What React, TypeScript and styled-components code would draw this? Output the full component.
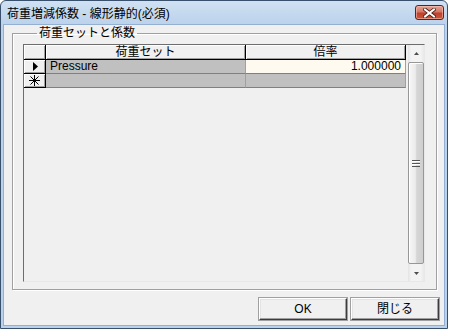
import React from 'react';
import styled, { createGlobalStyle } from 'styled-components';

const Global = createGlobalStyle`
  html, body { margin: 0; padding: 0; background: #ffffff; }
  body {
    font-family: "Liberation Sans", "Noto Sans CJK JP", sans-serif;
    font-size: 12px;
    color: #000;
  }
  * { box-sizing: border-box; }
`;

const Window = styled.div`
  width: 448px;
  height: 329px;
  border: 1px solid #39506d;
  border-radius: 6px 6px 0 0;
  background: linear-gradient(180deg, #d0e1f3 0px, #bcd3eb 22px, #b9d1ea 100%);
  display: flex;
  flex-direction: column;
  padding: 0 2px 2px 2px;
`;

const TitleBar = styled.div`
  height: 23px;
  flex: none;
  display: flex;
  align-items: flex-start;
  justify-content: space-between;
`;

const Title = styled.div`
  padding: 6px 0 0 4px;
  line-height: 14px;
  font-size: 12px;
  white-space: nowrap;
`;

const CloseButton = styled.div`
  width: 29px;
  height: 15px;
  margin: 4px 1px 0 0;
  border: 1px solid #5e2117;
  border-radius: 3px;
  background: linear-gradient(180deg, #e6a497 0%, #d27866 45%, #c0412b 55%, #c9563c 100%);
  box-shadow: inset 0 0 0 1px rgba(255, 200, 190, 0.55);
  display: flex;
  align-items: center;
  justify-content: center;
`;

const Client = styled.div`
  flex: 1;
  border: 1px solid #93b0d2;
  background: #f0f0f0;
  display: flex;
  flex-direction: column;
`;

const Group = styled.fieldset`
  margin: 1px 7px 0 8px;
  height: 264px;
  flex: none;
  padding: 4px 10px 6px 10px;
  border: 1px solid #a0a0a0;
  box-shadow: 1px 1px 0 #ffffff, inset 1px 1px 0 #ffffff;
  min-width: 0;
  display: flex;
`;

const Legend = styled.legend`
  padding: 0 2px;
  margin-left: 14px;
  line-height: 14px;
  font-size: 12px;
  height: 14px;
`;

const GridFrame = styled.div`
  width: 402px;
  height: 238px;
  border-style: solid;
  border-width: 1px;
  border-color: #6d6d6d #e8e8e8 #e8e8e8 #6d6d6d;
  background: #f0f0f0;
  display: flex;
  gap: 2px;
`;

const Table = styled.div`
  width: 382px;
  display: flex;
  flex-direction: column;
`;

const Row = styled.div<{ $h: number }>`
  display: grid;
  grid-template-columns: 22px 200px 160px;
  height: ${p => p.$h}px;
`;

const HeadCell = styled.div`
  background: #f0f0f0;
  border-right: 1px solid #000;
  border-bottom: 1px solid #000;
  box-shadow: inset 1px 1px 0 #ffffff, inset -1px -1px 0 #a0a0a0;
  display: flex;
  align-items: center;
  justify-content: center;
  line-height: 14px;
  font-size: 12px;
  white-space: nowrap;
`;

const Cell = styled.div<{ $bg: string; $right?: boolean }>`
  background: ${p => p.$bg};
  border-right: 1px solid #a0a0a0;
  border-bottom: 1px solid #808080;
  display: flex;
  align-items: center;
  justify-content: ${p => (p.$right ? 'flex-end' : 'flex-start')};
  padding: ${p => (p.$right ? '0 4px 0 0' : '0 0 0 4px')};
  font-size: 12px;
  line-height: 13px;
  white-space: nowrap;
`;

const Scrollbar = styled.div`
  width: 16px;
  display: flex;
  flex-direction: column;
  background: linear-gradient(90deg, #e3e3e3 0%, #f3f3f3 20%, #f3f3f3 80%, #e8e8e8 100%);
`;

const ArrowBox = styled.div`
  height: 16px;
  flex: none;
  display: flex;
  align-items: center;
  justify-content: center;
`;

const Thumb = styled.div`
  flex: 1;
  margin: 1px 0 1px 0;
  border: 1px solid #979797;
  border-radius: 2px;
  background: linear-gradient(90deg, #f6f6f6 0%, #ececec 45%, #d6d6d6 55%, #cfcfcf 100%);
  box-shadow: inset 1px 1px 0 #ffffff;
  display: flex;
  align-items: center;
  justify-content: center;
`;

const ButtonRow = styled.div`
  margin-top: auto;
  display: flex;
  justify-content: flex-end;
  gap: 4px;
  padding: 0 5px 5px 0;
`;

const Button = styled.div`
  width: 88px;
  height: 22px;
  background: #f0f0f0;
  border-style: solid;
  border-width: 1px;
  border-color: #ffffff #3c3c3c #3c3c3c #ffffff;
  box-shadow: inset -1px -1px 0 #a0a0a0, inset 1px 1px 0 #e3e3e3;
  outline: 1px solid #a0a0a0;
  display: flex;
  align-items: center;
  justify-content: center;
  font-size: 12px;
  line-height: 14px;
`;

const CloseX = () => (
  <svg width="13" height="10" viewBox="0 0 13 10">
    <path d="M2 1.5 L11 8.5 M11 1.5 L2 8.5" stroke="#4a1a12" strokeWidth="3.6" strokeLinecap="square" />
    <path d="M2 1.5 L11 8.5 M11 1.5 L2 8.5" stroke="#ffffff" strokeWidth="2" strokeLinecap="square" />
  </svg>
);

const Arrow = ({ up }: { up: boolean }) => (
  <svg width="5" height="3" viewBox="0 0 5 3">
    <path d={up ? 'M0 3 L2.5 0 L5 3 Z' : 'M0 0 L2.5 3 L5 0 Z'} fill="#4d4d4d" />
  </svg>
);

const Grip = () => (
  <svg width="8" height="7" viewBox="0 0 8 7">
    <path d="M0 0.5 H8 M0 3.5 H8 M0 6.5 H8" stroke="#555" strokeWidth="1" />
    <path d="M0 1.5 H8 M0 4.5 H8" stroke="#fff" strokeWidth="1" />
  </svg>
);

const RowMarker = () => (
  <svg width="6" height="9" viewBox="0 0 6 9">
    <path d="M1 0 L6 4.5 L1 9 Z" fill="#000" />
  </svg>
);

const NewRowMarker = () => (
  <svg width="11" height="11" viewBox="0 0 11 11">
    <path d="M5.5 0 V11 M0 5.5 H11 M1.5 1.5 L9.5 9.5 M9.5 1.5 L1.5 9.5" stroke="#000" strokeWidth="1" />
  </svg>
);

export default function App() {
  return (
    <>
      <Global />
      <Window>
        <TitleBar>
          <Title>荷重増減係数 - 線形静的(必須)</Title>
          <CloseButton>
            <CloseX />
          </CloseButton>
        </TitleBar>
        <Client>
          <Group>
            <Legend>荷重セットと係数</Legend>
            <GridFrame>
              <Table>
                <Row $h={15}>
                  <HeadCell />
                  <HeadCell>荷重セット</HeadCell>
                  <HeadCell>倍率</HeadCell>
                </Row>
                <Row $h={14}>
                  <HeadCell>
                    <RowMarker />
                  </HeadCell>
                  <Cell $bg="#c0c0c0">Pressure</Cell>
                  <Cell $bg="#fffaf0" $right>
                    1.000000
                  </Cell>
                </Row>
                <Row $h={14}>
                  <HeadCell>
                    <NewRowMarker />
                  </HeadCell>
                  <Cell $bg="#c0c0c0" />
                  <Cell $bg="#c0c0c0" />
                </Row>
              </Table>
              <Scrollbar>
                <ArrowBox>
                  <Arrow up />
                </ArrowBox>
                <Thumb>
                  <Grip />
                </Thumb>
                <ArrowBox>
                  <Arrow up={false} />
                </ArrowBox>
              </Scrollbar>
            </GridFrame>
          </Group>
          <ButtonRow>
            <Button>OK</Button>
            <Button>閉じる</Button>
          </ButtonRow>
        </Client>
      </Window>
    </>
  );
}
